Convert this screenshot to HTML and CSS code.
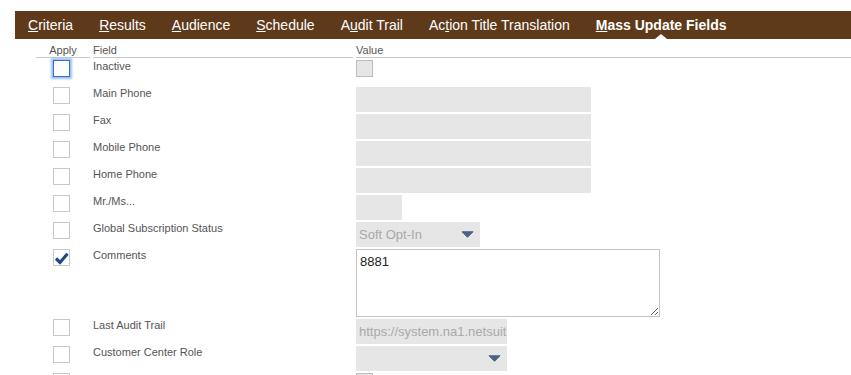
FILE: index.html
```html
<!DOCTYPE html>
<html lang="en">
<head>
<meta charset="utf-8">
<title>Mass Update Fields</title>
<link rel="stylesheet" href="styles.css">
</head>
<body>
<nav class="tabs">
  <span class="tab"><u>C</u>riteria</span>
  <span class="tab"><u>R</u>esults</span>
  <span class="tab"><u>A</u>udience</span>
  <span class="tab"><u>S</u>chedule</span>
  <span class="tab">A<u>u</u>dit Trail</span>
  <span class="tab">Ac<u>t</u>ion Title Translation</span>
  <span class="tab active"><u>M</u>ass Update Fields</span>
</nav>
<div class="form">
  <div class="hd hd-apply">Apply</div>
  <div class="hd">Field</div>
  <div class="hd">Value</div>

  <div class="cell apply"><span class="cb focus"></span></div>
  <div class="cell label">Inactive</div>
  <div class="cell value"><span class="cb disabled"></span></div>

  <div class="cell apply"><span class="cb"></span></div>
  <div class="cell label">Main Phone</div>
  <div class="cell value"><div class="field w235"></div></div>

  <div class="cell apply"><span class="cb"></span></div>
  <div class="cell label">Fax</div>
  <div class="cell value"><div class="field w235"></div></div>

  <div class="cell apply"><span class="cb"></span></div>
  <div class="cell label">Mobile Phone</div>
  <div class="cell value"><div class="field w235"></div></div>

  <div class="cell apply"><span class="cb"></span></div>
  <div class="cell label">Home Phone</div>
  <div class="cell value"><div class="field w235"></div></div>

  <div class="cell apply"><span class="cb"></span></div>
  <div class="cell label">Mr./Ms...</div>
  <div class="cell value"><div class="field w46"></div></div>

  <div class="cell apply"><span class="cb"></span></div>
  <div class="cell label">Global Subscription Status</div>
  <div class="cell value"><div class="field select w124"><span>Soft Opt-In</span><svg class="arrow" width="13" height="7" viewBox="0 0 13 7"><path d="M1 0.8h11L6.5 6.3z" fill="#4a6283" stroke="#4a6283" stroke-width="1" stroke-linejoin="round"/></svg></div></div>

  <div class="cell apply"><span class="cb checked"><svg width="15" height="15" viewBox="0 0 15 15"><polyline points="2,8.5 6,12.5 13.5,3.8" fill="none" stroke="#23458c" stroke-width="3.2"/></svg></span></div>
  <div class="cell label">Comments</div>
  <div class="cell value"><textarea class="comments">8881</textarea></div>

  <div class="cell apply"><span class="cb"></span></div>
  <div class="cell label">Last Audit Trail</div>
  <div class="cell value"><div class="field w151">https://system.na1.netsuite.com</div></div>

  <div class="cell apply"><span class="cb"></span></div>
  <div class="cell label">Customer Center Role</div>
  <div class="cell value"><div class="field select w151"><span></span><svg class="arrow" width="13" height="7" viewBox="0 0 13 7"><path d="M1 0.8h11L6.5 6.3z" fill="#4a6283" stroke="#4a6283" stroke-width="1" stroke-linejoin="round"/></svg></div></div>

  <div class="cell apply"><span class="cb"></span></div>
  <div class="cell label"></div>
  <div class="cell value"><span class="cb disabled"></span></div>
</div>
</body>
</html>
```
FILE: styles.css
```css
html, body {
  margin: 0;
  background: #fff;
}
body {
  padding-top: 11px;
  font-family: "Liberation Sans", Arial, Helvetica, sans-serif;
}
.tabs {
  margin-left: 15px;
  height: 28px;
  background: #5e3a1b;
  display: flex;
  gap: 26px;
  padding-left: 13px;
}
.tab {
  position: relative;
  color: #fff;
  font-size: 14px;
  line-height: 28px;
  white-space: nowrap;
}
.tab.active {
  font-weight: bold;
}
.tab.active::after {
  content: "";
  position: absolute;
  left: 50%;
  bottom: 0;
  margin-left: -6px;
  border-left: 6px solid transparent;
  border-right: 6px solid transparent;
  border-bottom: 5px solid #fff;
}
.form {
  margin-left: 36px;
  display: grid;
  grid-template-columns: 54px 260px 1fr;
  column-gap: 3px;
}
.hd {
  font-size: 11px;
  line-height: 13px;
  color: #555;
  padding: 5px 0 0;
  border-bottom: 1px solid #c8c8c8;
}
.hd-apply {
  text-align: center;
}
.cell {
  padding-top: 2px;
  min-height: 25px;
}
.apply {
  padding-left: 17px;
}
.cb {
  display: block;
  width: 17px;
  height: 17px;
  box-sizing: border-box;
  border: 1px solid #c8c8c8;
  background: #fff;
}
.cb.focus {
  border-color: #2f6fd0;
  box-shadow: 0 0 2px 2px #9dc0f0;
}
.cb.disabled {
  background: #e6e6e6;
  border-color: #bdbdbd;
}
.cb.checked svg {
  display: block;
}
.label {
  font-size: 11px;
  line-height: 12px;
  color: #555;
}
.field {
  height: 25px;
  box-sizing: border-box;
  background: #e6e6e6;
  font-size: 13px;
  line-height: 25px;
  color: #a9a9a9;
  padding-left: 3px;
  white-space: nowrap;
  overflow: hidden;
}
.select {
  display: flex;
  align-items: center;
  justify-content: space-between;
  padding-right: 6px;
}
.arrow {
  display: block;
}
.w235 { width: 235px; }
.w46 { width: 46px; }
.w124 { width: 124px; }
.w151 { width: 151px; }
.comments {
  display: block;
  width: 304px;
  height: 68px;
  box-sizing: border-box;
  margin: 0;
  border: 1px solid #c4c4c4;
  padding: 4px 3px 3px;
  font-family: "Liberation Sans", Arial, sans-serif;
  font-size: 13px;
  color: #222;
  background: #fff;
  resize: both;
  outline: none;
}
```
